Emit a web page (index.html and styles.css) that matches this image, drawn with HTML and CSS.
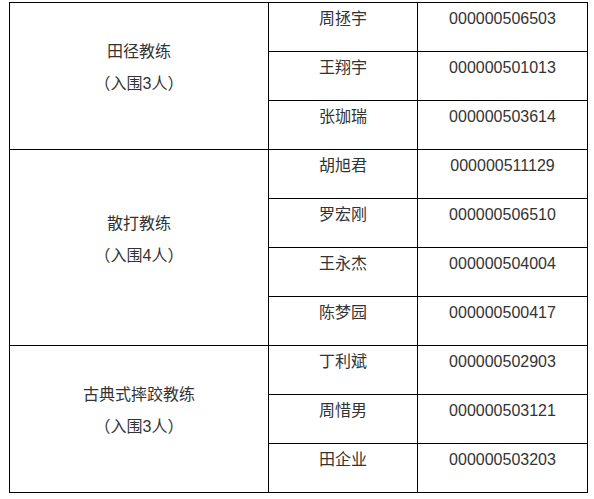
FILE: index.html
```html
<!DOCTYPE html>
<html lang="zh-CN">
<head>
<meta charset="utf-8">
<title>入围名单</title>
<link rel="stylesheet" href="styles.css">
</head>
<body>
<table class="roster">
  <colgroup>
    <col class="col-group">
    <col class="col-name">
    <col class="col-id">
  </colgroup>
  <tbody>
    <tr>
      <td class="group" rowspan="3"><p>田径教练</p><p>（入围3人）</p></td>
      <td><p>周拯宇</p></td>
      <td><p>000000506503</p></td>
    </tr>
    <tr>
      <td><p>王翔宇</p></td>
      <td><p>000000501013</p></td>
    </tr>
    <tr>
      <td><p>张珈瑞</p></td>
      <td><p>000000503614</p></td>
    </tr>
    <tr>
      <td class="group" rowspan="4"><p>散打教练</p><p>（入围4人）</p></td>
      <td><p>胡旭君</p></td>
      <td><p>000000511129</p></td>
    </tr>
    <tr>
      <td><p>罗宏刚</p></td>
      <td><p>000000506510</p></td>
    </tr>
    <tr>
      <td><p>王永杰</p></td>
      <td><p>000000504004</p></td>
    </tr>
    <tr>
      <td><p>陈梦园</p></td>
      <td><p>000000500417</p></td>
    </tr>
    <tr>
      <td class="group" rowspan="3"><p>古典式摔跤教练</p><p>（入围3人）</p></td>
      <td><p>丁利斌</p></td>
      <td><p>000000502903</p></td>
    </tr>
    <tr>
      <td><p>周惜男</p></td>
      <td><p>000000503121</p></td>
    </tr>
    <tr>
      <td><p>田企业</p></td>
      <td><p>000000503203</p></td>
    </tr>
  </tbody>
</table>
</body>
</html>
```

FILE: styles.css
```css
html, body {
  background: #fff;
}
body {
  margin: 2px 0 0 9px;
  font-family: "Liberation Sans", "Noto Sans CJK SC", sans-serif;
  font-size: 16px;
  color: #333;
}
.roster {
  border-collapse: collapse;
  table-layout: fixed;
  width: 578px;
}
.col-group { width: 259px; }
.col-name { width: 149px; }
.col-id { width: 170px; }
.roster td {
  border: 1px solid #000;
  padding: 0 0 16px 0;
  text-align: center;
  vertical-align: middle;
}
.roster p {
  margin: 0;
  line-height: 32px;
  white-space: nowrap;
}
```
